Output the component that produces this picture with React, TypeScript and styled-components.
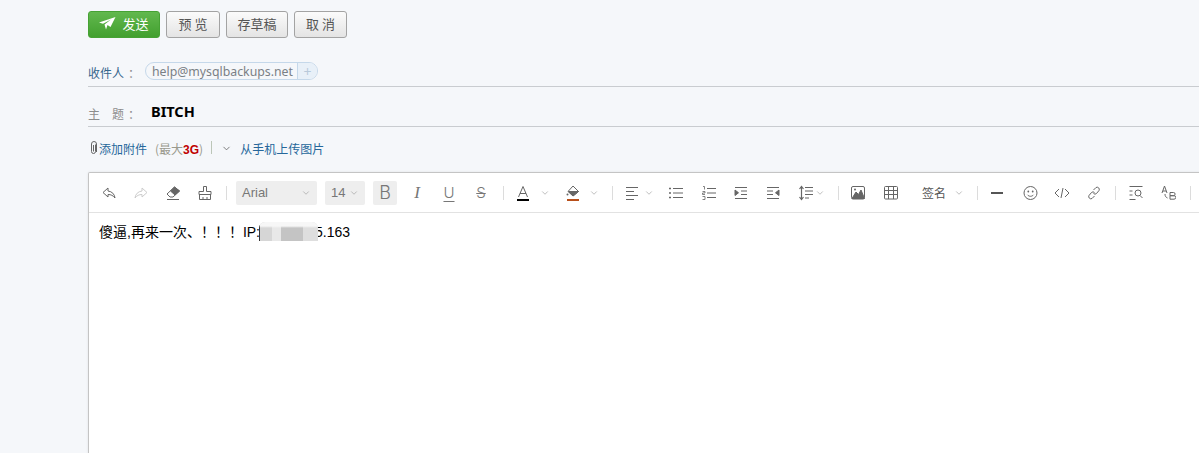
import { ReactNode } from 'react';
import styled, { createGlobalStyle } from 'styled-components';
import { ChevronDown } from 'lucide-react';

const GlobalStyle = createGlobalStyle`
  html, body {
    margin: 0;
    padding: 0;
    background: #f5f7fa;
    overflow: hidden;
  }
  body {
    font-family: "Liberation Sans", "Noto Sans CJK SC", sans-serif;
  }
`;

const Page = styled.div`
  width: 1199px;
  height: 453px;
  overflow: hidden;
  padding: 11px 0 0 88px;
  box-sizing: border-box;
`;

const Actions = styled.div`
  display: flex;
  gap: 6px;
`;

const ActionButton = styled.button<{ $w: number }>`
  width: ${(p) => p.$w}px;
  height: 27px;
  padding: 0 0 2px;
  border: 1px solid #a3a3a3;
  border-radius: 3px;
  background: linear-gradient(#fbfbfb, #e4e4e4);
  color: #555;
  font: 13px "Noto Sans CJK SC", sans-serif;
`;

const SendButton = styled.button`
  width: 72px;
  height: 27px;
  padding: 0 0 2px;
  border: 1px solid #46a234;
  border-radius: 3px;
  background: linear-gradient(#62b84e, #42a02f);
  color: #fff;
  font: 13px "Noto Sans CJK SC", sans-serif;
  display: flex;
  align-items: center;
  justify-content: center;
  gap: 6px;
`;

const Field = styled.div<{ $h: number; $top: number }>`
  height: ${(p) => p.$h}px;
  padding-top: ${(p) => p.$top}px;
  box-sizing: border-box;
  display: flex;
  align-items: center;
  border-bottom: 1px solid #c9ccd0;
`;

const Label = styled.span<{ $muted?: boolean }>`
  width: 36px;
  flex: none;
  font: 12px "Noto Sans CJK SC", sans-serif;
  color: ${(p) => (p.$muted ? '#8d8d8d' : '#35668c')};
  white-space: pre;
`;

const Colon = styled.span<{ $w: number }>`
  width: ${(p) => p.$w}px;
  flex: none;
  padding-left: 4px;
  box-sizing: border-box;
  font: 12px "Noto Sans CJK SC", sans-serif;
  color: #8d8d8d;
`;

const Chip = styled.span`
  display: flex;
  height: 16px;
  margin-bottom: 2px;
  border: 1px solid #c5d8ea;
  border-radius: 9px;
  font: 12.3px/17px "Noto Sans", "Liberation Sans", sans-serif;
  color: #7a7f85;
  overflow: hidden;
`;

const ChipText = styled.span`
  padding: 0 4px 0 6px;
`;

const ChipAdd = styled.span`
  width: 19px;
  text-align: center;
  border-left: 1px solid #c5d8ea;
  background: #e8f0f8;
  color: #b8c9da;
  font-size: 14px;
`;

const Subject = styled.span`
  margin-bottom: 4px;
  font: bold 14.5px "Noto Sans", "Liberation Sans", sans-serif;
  color: #000;
`;

const AttachRow = styled.div`
  height: 45px;
  padding-bottom: 3px;
  box-sizing: border-box;
  display: flex;
  align-items: center;
  font: 12px "Noto Sans CJK SC", sans-serif;
  color: #26679a;
`;

const ClipIcon = styled.svg`
  width: 9px;
  height: 14px;
  margin: 0 1px 0 1px;
  flex: none;
`;

const Limit = styled.span`
  color: #9a9a8e;
  margin-left: 8px;
`;

const LimitValue = styled.b`
  color: #c00000;
  font-family: "Liberation Sans", sans-serif;
`;

const Divider = styled.span`
  width: 1px;
  height: 13px;
  margin: 0 9px 2px 8px;
  background: #bcc6b8;
`;

const UploadCaret = styled(ChevronDown).attrs({ size: 11, strokeWidth: 1.8 })`
  color: #666;
  flex: none;
`;

const Upload = styled.span`
  margin-left: 8px;
`;

const Editor = styled.div`
  width: 1200px;
  height: 282px;
  background: #fff;
  border: 1px solid #c4c4c4;
  border-bottom: 0;
  border-radius: 2px 0 0 0;
  box-shadow: 0 0 3px rgba(0, 0, 0, 0.08);
  box-sizing: border-box;
`;

const Toolbar = styled.div`
  height: 39px;
  display: flex;
  align-items: center;
  padding-left: 4px;
  border-bottom: 1px solid #e2e2e2;
`;

const Tool = styled.span<{ $w?: number; $ml?: number }>`
  width: ${(p) => p.$w ?? 32}px;
  margin-left: ${(p) => p.$ml ?? 0}px;
  height: 24px;
  flex: none;
  display: flex;
  align-items: center;
  justify-content: center;
  color: #666;
`;

const Sep = styled.span<{ $l: number; $r: number }>`
  width: 1px;
  height: 14px;
  flex: none;
  margin: 0 ${(p) => p.$r}px 0 ${(p) => p.$l}px;
  background: #dcdcdc;
`;

const Select = styled.span<{ $w: number }>`
  width: ${(p) => p.$w}px;
  height: 24px;
  flex: none;
  margin-right: 8px;
  padding: 0 6px;
  box-sizing: border-box;
  display: flex;
  align-items: center;
  justify-content: space-between;
  background: #eee;
  border-radius: 2px;
  font: 13px "Liberation Sans", Arial, sans-serif;
  color: #777;
`;

const BoldTool = styled(Tool)`
  width: 24px;
  background: #eee;
  border-radius: 2px;
  font: 300 18px Inter, "Liberation Sans", sans-serif;
  color: #777;
`;

const ItalicGlyph = styled.span`
  font: italic 17px "Liberation Serif", serif;
  color: #777;
`;

const SansGlyph = styled.span<{ $line: 'underline' | 'line-through' }>`
  font: 300 15px Inter, "Liberation Sans", sans-serif;
  color: #777;
  text-decoration: ${(p) => p.$line};
  text-decoration-thickness: 1px;
  text-underline-offset: 3px;
`;

const Caret = styled(ChevronDown).attrs({ size: 10, strokeWidth: 1.5 })`
  color: #999;
  flex: none;
`;

const SignText = styled.span`
  font: 12px "Noto Sans CJK SC", sans-serif;
  color: #555;
  margin-right: 8px;
`;

const Body = styled.div`
  padding: 9px 10px;
  font: 14px/20px "Liberation Sans", "Noto Sans CJK SC", sans-serif;
  color: #000;
  display: flex;
`;

const Masked = styled.span`
  position: relative;
  z-index: 1;
  width: 58px;
  height: 20px;
  margin: 0 -3px 0 -1px;
  flex: none;
  border-left: 1px solid #333;
  background:
    linear-gradient(#f7f7f7 0 4px, transparent 6px),
    linear-gradient(90deg, #d6d6d6 0 20%, #e8e8e8 20% 36%, #c4c4c4 36% 75%, #dedede 75% 100%);
  clip-path: inset(0 0 1px 0 round 6px 6px 0 0);
`;

const Svg = ({ children, w = 16 }: { children: ReactNode; w?: number }) => (
  <svg width={w} height="16" viewBox={`0 0 ${w} 16`} fill="none" stroke="#666" strokeWidth="1">
    {children}
  </svg>
);

export default function App() {
  return (
    <Page>
      <GlobalStyle />
      <Actions>
        <SendButton>
          <svg width="17" height="13" viewBox="0 0 17 13">
            <path d="M0 5.500 16.500 0 11.500 10 8.500 8 7 12.500 5.500 7.500 12 2.500 4 6.800Z" fill="#fff" />
          </svg>
          发送
        </SendButton>
        <ActionButton $w={54}>预 览</ActionButton>
        <ActionButton $w={62}>存草稿</ActionButton>
        <ActionButton $w={53}>取 消</ActionButton>
      </Actions>

      <Field $h={49} $top={20}>
        <Label>收件人</Label>
        <Colon $w={21}>：</Colon>
        <Chip>
          <ChipText>help@mysqlbackups.net</ChipText>
          <ChipAdd>+</ChipAdd>
        </Chip>
      </Field>
      <Field $h={40} $top={13}>
        <Label $muted>{'主\u2003题'}</Label>
        <Colon $w={27}>：</Colon>
        <Subject>BITCH</Subject>
      </Field>

      <AttachRow>
        <ClipIcon viewBox="0 0 9 14" fill="none" stroke="#666" strokeWidth="1">
          <path d="M6.500 3.500v7a2 2 0 0 1-4 0V3a2.500 2.500 0 0 1 5 0v8" />
          <path d="M4.500 4v6.500" />
        </ClipIcon>
        添加附件
        <Limit>
          (最大<LimitValue>3G</LimitValue>)
        </Limit>
        <Divider />
        <UploadCaret />
        <Upload>从手机上传图片</Upload>
      </AttachRow>

      <Editor>
        <Toolbar>
          <Tool>
            <Svg>
              <path d="M7 3 2 7.500 7 12V9.500c3 0 5 1 7 3.500-.5-4-3-6.500-7-7Z" />
            </Svg>
          </Tool>
          <Tool>
            <Svg>
              <path d="M9 3 14 7.500 9 12V9.500c-3 0-5 1-7 3.500.5-4 3-6.500 7-7Z" stroke="#ccc" />
            </Svg>
          </Tool>
          <Tool>
            <Svg>
              <path d="M9.500 2 14.500 6 8 12H5L2 9Z" />
              <path d="M9.500 2 14.500 6 10 10 5.500 6Z" fill="#666" />
              <path d="M2 14.500H14" />
            </Svg>
          </Tool>
          <Tool>
            <Svg>
              <path d="M6.500 1.500h3v5h4.500v3h-12v-3h4.500ZM2.500 9.500v5h11v-5M6 12v2.500M10 12v2.500" />
            </Svg>
          </Tool>
          <Sep $l={5} $r={9} />
          <Select $w={81}>
            Arial
            <Caret />
          </Select>
          <Select $w={40}>
            14
            <Caret />
          </Select>
          <BoldTool>B</BoldTool>
          <Tool $ml={4}>
            <ItalicGlyph>I</ItalicGlyph>
          </Tool>
          <Tool>
            <SansGlyph $line="underline">U</SansGlyph>
          </Tool>
          <Tool>
            <SansGlyph $line="line-through">S</SansGlyph>
          </Tool>
          <Sep $l={6} $r={9} />
          <Tool $w={20}>
            <Svg w={14}>
              <path d="M2.500 12 7 1.500 11.500 12M4 8.500h6" />
              <path d="M1 15h12" stroke="#000" strokeWidth="2" />
            </Svg>
          </Tool>
          <Tool $w={23}>
            <Caret />
          </Tool>
          <Tool $w={20} $ml={7}>
            <Svg w={14}>
              <path d="M7 1 12.500 6.500 7 11 2 6.500Z" />
              <path d="M2.500 6.500h10L7 11Z" fill="#666" />
              <circle cx="1.500" cy="9.500" r="1" fill="#666" stroke="none" />
              <path d="M1 15h12" stroke="#b8501b" strokeWidth="2" />
            </Svg>
          </Tool>
          <Tool $w={22}>
            <Caret />
          </Tool>
          <Sep $l={7} $r={11} />
          <Tool $w={16}>
            <Svg w={14}>
              <path d="M1 2.500h12M1 6.500h8M1 10.500h12M1 14.500h8" />
            </Svg>
          </Tool>
          <Tool $w={18}>
            <Caret />
          </Tool>
          <Tool $ml={2}>
            <Svg w={14}>
              <path d="M4 3.500h10M4 8h10M4 12.500h10" />
              <path d="M0 3.500h2M0 8h2M0 12.500h2" strokeWidth="1.600" />
            </Svg>
          </Tool>
          <Tool $ml={1}>
            <Svg w={14}>
              <path d="M5 3.500h9M5 8h9M5 12.500h9" />
              <path d="M1 1.500h1.500v3M.5 6.500h2.500v1.500H.5v1.500H3M.5 11.500H3v3H.5" strokeWidth=".8" />
            </Svg>
          </Tool>
          <Tool>
            <Svg w={14}>
              <path d="M1 2.500h12M7 6h6M7 9.500h6M1 13.500h12" />
              <path d="M1 5 4.500 7.800 1 10.500Z" fill="#666" />
            </Svg>
          </Tool>
          <Tool>
            <Svg w={14}>
              <path d="M1 2.500h12M1 6h6M1 9.500h6M1 13.500h12" />
              <path d="M13 5 9.500 7.800 13 10.500Z" fill="#666" />
            </Svg>
          </Tool>
          <Tool $w={20} $ml={6}>
            <Svg w={15}>
              <path d="M3.500 1.500v13M1.500 4l2-2.500 2 2.500M1.500 12l2 2.500 2-2.500" strokeWidth="1.200" />
              <path d="M7 2.500h8M7 6h8M7 9.500h8M7 13h4" />
            </Svg>
          </Tool>
          <Tool $w={10}>
            <Caret />
          </Tool>
          <Sep $l={13} $r={3} />
          <Tool>
            <Svg w={14}>
              <rect x=".5" y="1.500" width="13" height="12.500" rx="1.500" />
              <path d="M1 13.500 5 7l2.500 2.500L10 5l3.500 8.500Z" fill="#666" />
              <circle cx="4" cy="4.500" r="1" fill="#666" stroke="none" />
            </Svg>
          </Tool>
          <Tool $ml={1}>
            <Svg w={14}>
              <rect x=".5" y="1.500" width="13" height="12.500" rx="1" />
              <path d="M.5 5.500h13M.5 9.500h13M4.500 1.500V14M9.500 1.500V14" />
            </Svg>
          </Tool>
          <Tool $w={56} $ml={8}>
            <SignText>签名</SignText>
            <Caret />
          </Tool>
          <Sep $l={6} $r={3} />
          <Tool>
            <Svg w={12}>
              <path d="M0 8h12" strokeWidth="2" stroke="#555" />
            </Svg>
          </Tool>
          <Tool $ml={1}>
            <Svg w={15}>
              <circle cx="7.500" cy="8" r="6.500" />
              <circle cx="5.300" cy="6.500" r=".9" fill="#666" stroke="none" />
              <circle cx="9.700" cy="6.500" r=".9" fill="#666" stroke="none" />
              <path d="M4.500 9.800c1.500 2 4.500 2 6 0" />
            </Svg>
          </Tool>
          <Tool>
            <Svg>
              <path d="M5 4 1 8l4 4M11 4l4 4-4 4M9 3 7 13" />
            </Svg>
          </Tool>
          <Tool>
            <Svg w={14}>
              <path d="M6.500 5 9 2.500a2.200 2.200 0 0 1 3 3L9.500 8.500a2.200 2.200 0 0 1-3 0M7.500 11 5 13.500a2.200 2.200 0 0 1-3-3L4.500 7.500a2.200 2.200 0 0 1 3 0" />
            </Svg>
          </Tool>
          <Sep $l={5} $r={4} />
          <Tool>
            <Svg w={14}>
              <path d="M.5 1.500h13M.5 6h3M.5 10h3M.5 14.500h6" />
              <circle cx="9" cy="8" r="3" />
              <path d="M11 10.500 13.500 13" />
            </Svg>
          </Tool>
          <Tool>
            <Svg w={15}>
              <path d="M1 8 3.500 1 6 8M2 6h3M4 9c0 2 .5 3 2.500 4" />
              <path d="M9 7.500h3.500a1.500 1.500 0 0 1 0 3.200H9ZM9 10.700h4a1.700 1.700 0 0 1 0 3.500H9Z" />
            </Svg>
          </Tool>
          <Sep $l={6} $r={0} />
        </Toolbar>
        <Body>
          傻逼,再来一次、！！！IP:
          <Masked />
          5.163
        </Body>
      </Editor>
    </Page>
  );
}
